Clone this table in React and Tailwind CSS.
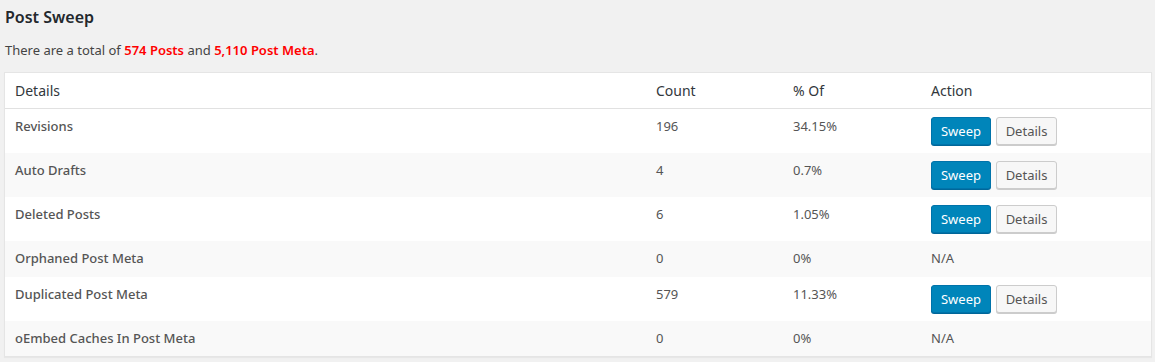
import React from "react";

const rows = [
  { name: "Revisions", count: "196", pct: "34.15%", action: true },
  { name: "Auto Drafts", count: "4", pct: "0.7%", action: true },
  { name: "Deleted Posts", count: "6", pct: "1.05%", action: true },
  { name: "Orphaned Post Meta", count: "0", pct: "0%", action: false },
  { name: "Duplicated Post Meta", count: "579", pct: "11.33%", action: true },
  { name: "oEmbed Caches In Post Meta", count: "0", pct: "0%", action: false },
];

export default function App() {
  return (
    <div
      className="min-h-[362px] w-[1155px] bg-[#f1f1f1] text-[#444]"
      style={{ fontFamily: '"Noto Sans", "Open Sans", sans-serif' }}
    >
      <div className="pl-[4px] pr-[4px] pt-[4px]">
        <h2 className="pl-px text-[16px] font-semibold leading-[26px] text-[#23282d]">
          Post Sweep
        </h2>
        <p className="mt-[10px] pl-px text-[13px] leading-[20px] text-[#444]">
          There are a total of{" "}
          <span className="font-semibold text-[#f00]">574 Posts</span> and{" "}
          <span className="font-semibold text-[#f00]">5,110 Post Meta</span>.
        </p>
        <div className="mt-[12px] w-[1148px] border border-[#e5e5e5] bg-white shadow-[0_1px_1px_rgba(0,0,0,0.04)]">
          <table className="w-full table-fixed border-collapse">
            <colgroup>
              <col className="w-[641px]" />
              <col className="w-[137px]" />
              <col className="w-[138px]" />
              <col />
            </colgroup>
            <thead>
              <tr className="border-b border-[#e1e1e1]">
                {["Details", "Count", "% Of", "Action"].map((h) => (
                  <th
                    key={h}
                    className="px-[10px] py-[8px] text-left align-top text-[14px] font-normal leading-[19px] text-[#32373c]"
                  >
                    {h}
                  </th>
                ))}
              </tr>
            </thead>
            <tbody>
              {rows.map((r, i) => (
                <tr key={r.name} className={i % 2 === 1 ? "bg-[#f9f9f9]" : "bg-white"}>
                  <td className="px-[10px] py-[8px] align-top text-[13px] font-medium leading-[19.5px] text-[#555]">
                    {r.name}
                  </td>
                  <td className="px-[10px] py-[8px] align-top text-[13px] leading-[19.5px] text-[#555]">
                    {r.count}
                  </td>
                  <td className="px-[10px] py-[8px] align-top text-[13px] leading-[19.5px] text-[#555]">
                    {r.pct}
                  </td>
                  <td className="px-[10px] py-[8px] align-top text-[13px] leading-[19.5px] text-[#555]">
                    {r.action ? (
                      <div className="flex gap-[5px]">
                        <button className="h-[28px] w-[60px] rounded-[3px] border border-[#0073aa] bg-[#0085ba] text-[13px] leading-[26px] text-white shadow-[0_1px_0_#006799]">
                          Sweep
                        </button>
                        <button className="h-[28px] w-[61px] rounded-[3px] border border-[#ccc] bg-[#f7f7f7] text-[13px] leading-[26px] text-[#555] shadow-[0_1px_0_#ccc]">
                          Details
                        </button>
                      </div>
                    ) : (
                      "N/A"
                    )}
                  </td>
                </tr>
              ))}
            </tbody>
          </table>
        </div>
      </div>
    </div>
  );
}
